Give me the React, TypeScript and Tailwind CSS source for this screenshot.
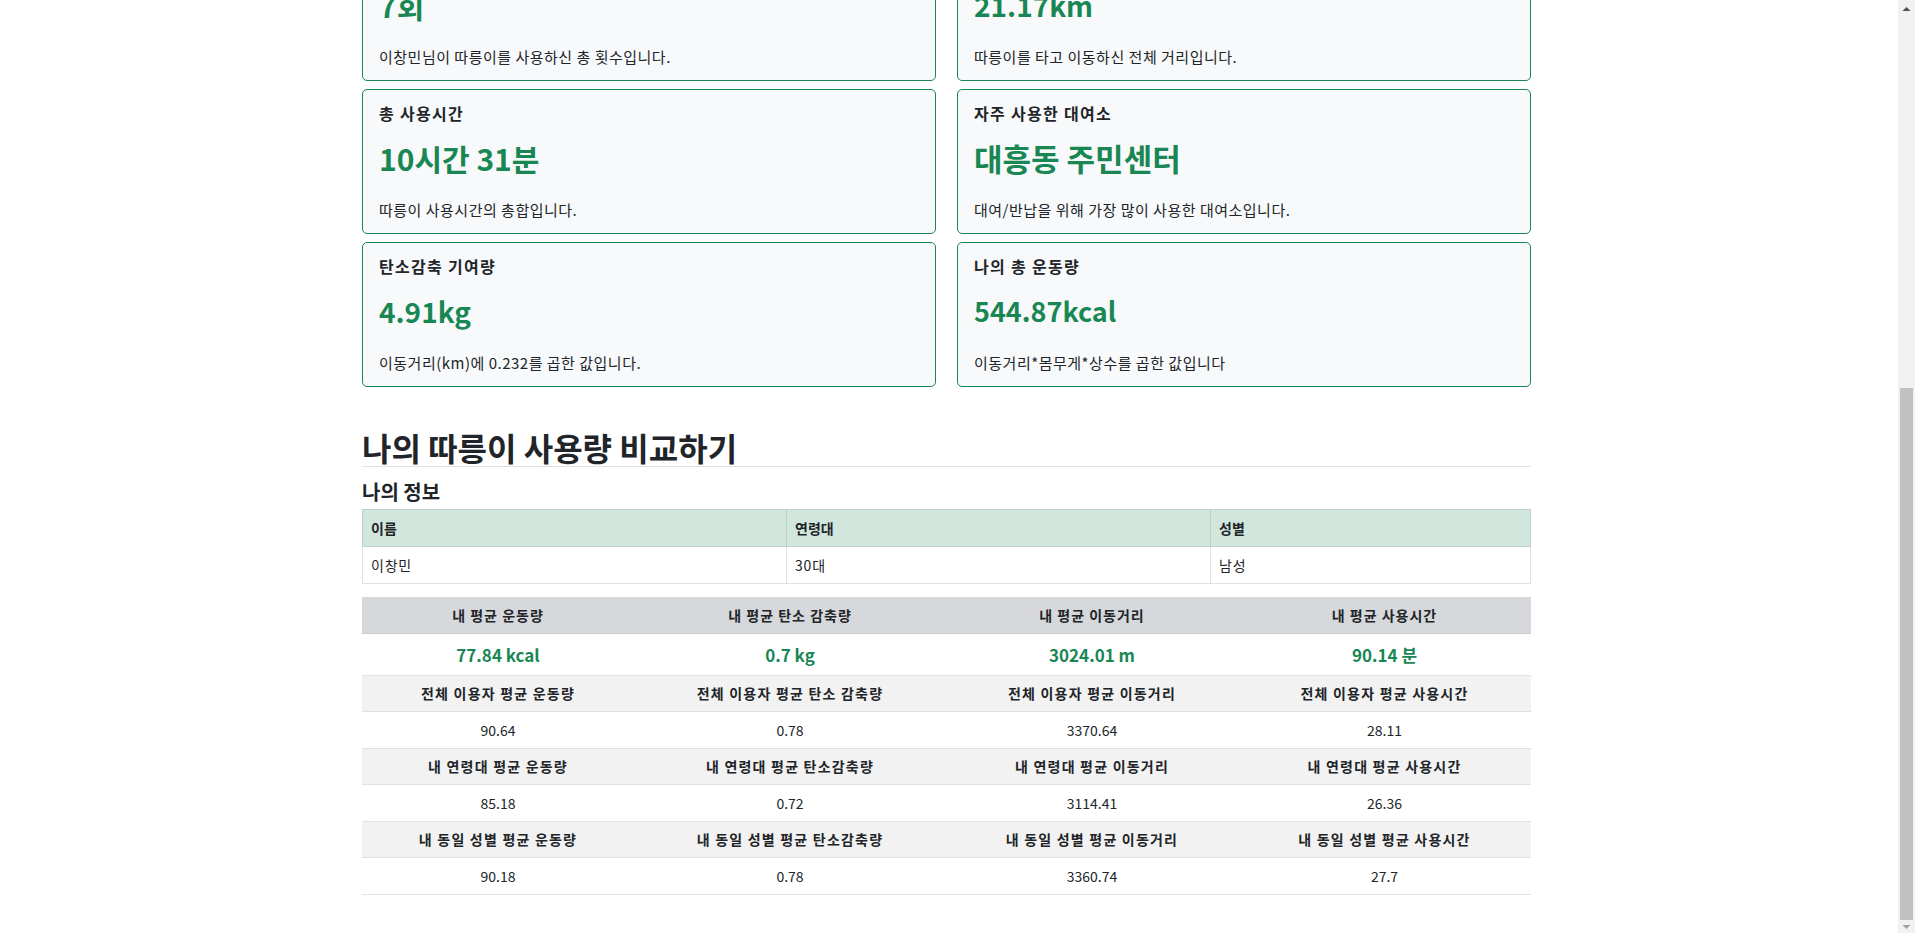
import React from "react";

type CardProps = { title: string; value: string; desc: string; vcls: string };

function StatCard({ title, value, desc, vcls }: CardProps) {
  return (
    <div className="mb-2 h-[145px] rounded-[5px] border border-[#198754] bg-[#f8f9fa] px-4 pt-[13px]">
      <div className="h-[21px] text-[16px] font-semibold leading-[21px] tracking-[1.3px] text-[#212529]">{title}</div>
      <div className={`mt-[15px] h-[38px] font-bold leading-[38px] text-[#198754] ${vcls}`}>{value}</div>
      <div className="mt-[22px] h-[21px] text-[15px] leading-[21px] tracking-[0.5px] text-[#212529]">{desc}</div>
    </div>
  );
}

const cards: CardProps[] = [
  { title: "총 이용횟수", value: "7회", desc: "이창민님이 따릉이를 사용하신 총 횟수입니다.", vcls: "text-[30px]" },
  { title: "총 이동거리", value: "21.17km", desc: "따릉이를 타고 이동하신 전체 거리입니다.", vcls: "text-[28px]" },
  { title: "총 사용시간", value: "10시간 31분", desc: "따릉이 사용시간의 총합입니다.", vcls: "text-[30px]" },
  { title: "자주 사용한 대여소", value: "대흥동 주민센터", desc: "대여/반납을 위해 가장 많이 사용한 대여소입니다.", vcls: "text-[31px]" },
  { title: "탄소감축 기여량", value: "4.91kg", desc: "이동거리(km)에 0.232를 곱한 값입니다.", vcls: "text-[28px]" },
  { title: "나의 총 운동량", value: "544.87kcal", desc: "이동거리*몸무게*상수를 곱한 값입니다", vcls: "text-[27px]" },
];

const groups: { head: string[]; vals: string[] }[] = [
  {
    head: ["전체 이용자 평균 운동량", "전체 이용자 평균 탄소 감축량", "전체 이용자 평균 이동거리", "전체 이용자 평균 사용시간"],
    vals: ["90.64", "0.78", "3370.64", "28.11"],
  },
  {
    head: ["내 연령대 평균 운동량", "내 연령대 평균 탄소감축량", "내 연령대 평균 이동거리", "내 연령대 평균 사용시간"],
    vals: ["85.18", "0.72", "3114.41", "26.36"],
  },
  {
    head: ["내 동일 성별 평균 운동량", "내 동일 성별 평균 탄소감축량", "내 동일 성별 평균 이동거리", "내 동일 성별 평균 사용시간"],
    vals: ["90.18", "0.78", "3360.74", "27.7"],
  },
];

const cols = "grid grid-cols-[272px_312px_292px_293px]";

export default function App() {
  return (
    <div className="flex h-[933px] w-full overflow-hidden bg-white font-['Noto_Sans_CJK_KR','Noto_Sans',sans-serif] text-[#212529]">
      <div className="min-w-0 flex-1 overflow-hidden">
        <div className="ml-[362px] mt-[-64px] w-[1169px]">
          <div className="grid grid-cols-2 gap-x-[21px]">
            {cards.map((c) => (
              <StatCard key={c.title} {...c} />
            ))}
          </div>

          <h2 className="mt-[33px] h-[39px] border-b border-[#dee2e6] text-[32px] font-bold leading-[38px]">
            나의 따릉이 사용량 비교하기
          </h2>
          <h5 className="mt-[13px] mb-[5px] h-[24px] text-[20px] font-semibold leading-[24px]">나의 정보</h5>

          <div className="text-[14px]">
            <div className="grid h-[38px] grid-cols-[424px_424px_1fr] border-y border-[#bcd0c7] bg-[#d1e7dd] font-bold">
              <div className="flex items-center border-l border-[#bcd0c7] px-2">이름</div>
              <div className="flex items-center border-l border-[#bcd0c7] px-2">연령대</div>
              <div className="flex items-center border-x border-[#bcd0c7] px-2">성별</div>
            </div>
            <div className="grid h-[37px] grid-cols-[424px_424px_1fr] border-b border-[#dee2e6] tracking-[0.8px]">
              <div className="flex items-center border-l border-[#dee2e6] px-2">이창민</div>
              <div className="flex items-center border-l border-[#dee2e6] px-2">30대</div>
              <div className="flex items-center border-x border-[#dee2e6] px-2">남성</div>
            </div>
          </div>

          <div className="mt-[13px] text-[14px]">
            <div className={`${cols} h-[37px] border-b border-[#c8cbcf] bg-[#d6d8db] font-semibold tracking-[1px]`}>
              {["내 평균 운동량", "내 평균 탄소 감축량", "내 평균 이동거리", "내 평균 사용시간"].map((t) => (
                <div key={t} className="flex items-center justify-center">{t}</div>
              ))}
            </div>
            <div className={`${cols} h-[42px] border-b border-[#dee2e6] text-[17px] font-bold text-[#198754]`}>
              {["77.84 kcal", "0.7 kg", "3024.01 m", "90.14 분"].map((t) => (
                <div key={t} className="flex items-center justify-center">{t}</div>
              ))}
            </div>
            {groups.map((g, i) => (
              <React.Fragment key={i}>
                <div className={`${cols} h-[36px] border-b border-[#dee2e6] bg-[#f2f2f2] font-semibold tracking-[1.2px]`}>
                  {g.head.map((t) => (
                    <div key={t} className="flex items-center justify-center">{t}</div>
                  ))}
                </div>
                <div className={`${cols} h-[37px] border-b border-[#dee2e6]`}>
                  {g.vals.map((t, j) => (
                    <div key={j} className="flex items-center justify-center">{t}</div>
                  ))}
                </div>
              </React.Fragment>
            ))}
          </div>
        </div>
      </div>

      <div className="flex w-[17px] shrink-0 flex-col bg-[#f1f1f1]">
        <div className="flex h-[17px] items-center justify-center">
          <svg width="9" height="6" viewBox="0 0 9 6">
            <polygon points="0.5,5 4.5,1 8.5,5" fill="#505050" />
          </svg>
        </div>
        <div className="h-[371px]" />
        <div className="mx-[2px] h-[532px] bg-[#c1c1c1]" />
        <div className="flex flex-1 items-center justify-center">
          <svg width="9" height="6" viewBox="0 0 9 6">
            <polygon points="0.5,1 4.5,5 8.5,1" fill="#a3a3a3" />
          </svg>
        </div>
      </div>
    </div>
  );
}
